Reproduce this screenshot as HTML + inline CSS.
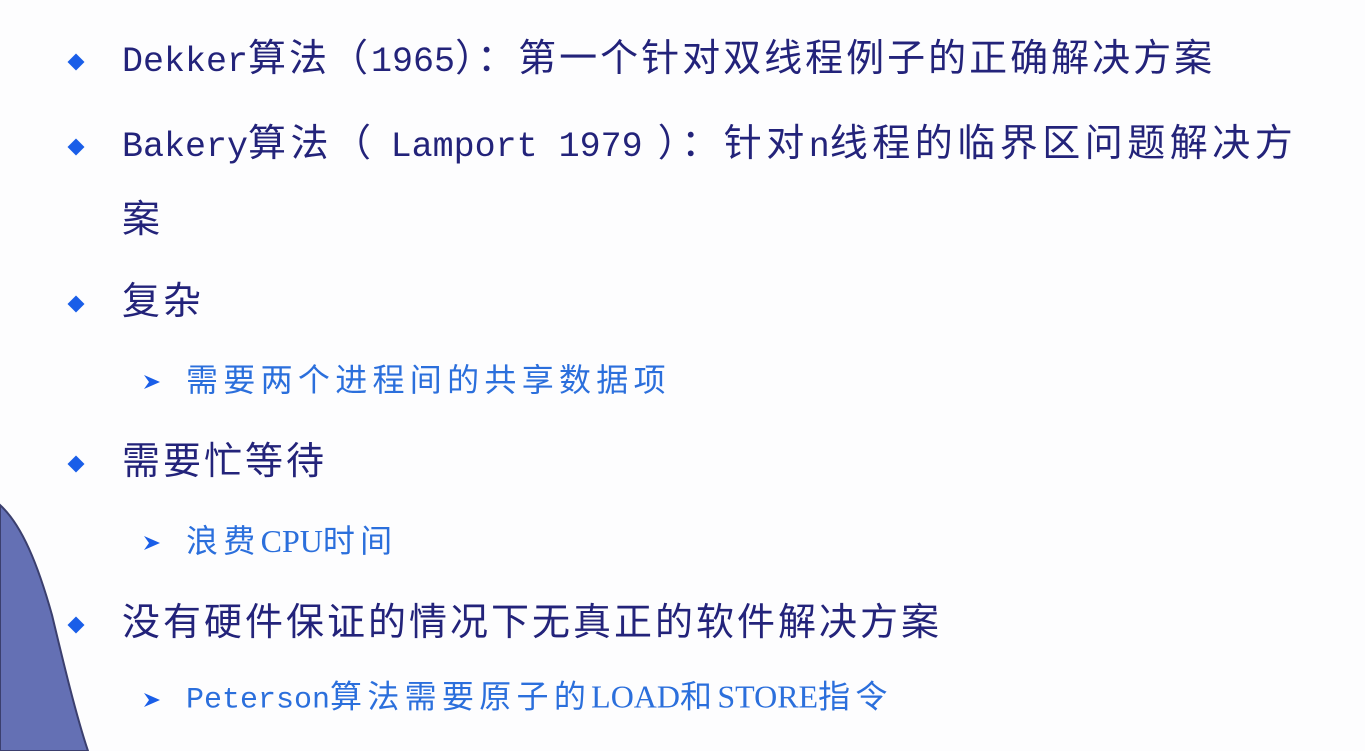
<!DOCTYPE html>
<html><head><meta charset="utf-8"><style>
body{margin:0;width:1365px;height:751px;background:#fdfdfe;overflow:hidden;position:relative;font-family:"Liberation Sans","Noto Sans CJK SC",sans-serif;}
.l{position:absolute;white-space:nowrap;line-height:1;transform:translateY(-50%);}
.m{left:122px;font-size:38px;color:#23237a;letter-spacing:3px;}
.s{left:186px;font-size:32px;color:#2b6fdc;letter-spacing:5.3px;}
.mono{font-family:"Liberation Mono",monospace;letter-spacing:0;}
.m .mono{font-size:35px;}
.s .mono{font-size:30px;}
.ser{font-family:"Liberation Serif",serif;letter-spacing:0;}
.d{position:absolute;width:12px;height:12px;background:#1a5ee8;transform:translate(-50%,-50%) rotate(45deg);left:76px;}
.a{position:absolute;left:143px;transform:translateY(-50%);}
</style></head><body>
<svg style="position:absolute;left:0;top:0" width="1365" height="751"><path d="M0 505 C22 525 38 565 52 615 C64 665 76 715 88 751 L0 751 Z" fill="#6470b4" stroke="#3b3f6e" stroke-width="2"/></svg>

<div class="d" style="top:62px"></div><div class="l m" style="top:60px"><span class="mono">Dekker</span>算法（<span class="mono">1965</span>）：第一个针对双线程例子的正确解决方案</div>
<div class="d" style="top:147px"></div><div class="l m" style="top:145px;letter-spacing:4.5px"><span class="mono">Bakery</span>算法（ <span class="mono">Lamport 1979</span> ）：针对<span class="mono">n</span>线程的临界区问题解决方</div>
<div class="l m" style="top:220px">案</div>
<div class="d" style="top:304px"></div><div class="l m" style="top:302px">复杂</div>
<svg class="a" style="top:382px" width="18" height="18" viewBox="0 0 18 18"><path d="M1 2 L17 9 L1 16 L6 9 Z" fill="#1a5ee8"/></svg><div class="l s" style="top:380px">需要两个进程间的共享数据项</div>
<div class="d" style="top:464px"></div><div class="l m" style="top:462px">需要忙等待</div>
<svg class="a" style="top:543px" width="18" height="18" viewBox="0 0 18 18"><path d="M1 2 L17 9 L1 16 L6 9 Z" fill="#1a5ee8"/></svg><div class="l s" style="top:541px">浪费<span class="ser">CPU</span>时间</div>
<div class="d" style="top:625px"></div><div class="l m" style="top:623px">没有硬件保证的情况下无真正的软件解决方案</div>
<svg class="a" style="top:700px" width="18" height="18" viewBox="0 0 18 18"><path d="M1 2 L17 9 L1 16 L6 9 Z" fill="#1a5ee8"/></svg><div class="l s" style="top:698px"><span class="mono">Peterson</span>算法需要原子的<span class="ser">LOAD</span>和<span class="ser">STORE</span>指令</div>
</body></html>
